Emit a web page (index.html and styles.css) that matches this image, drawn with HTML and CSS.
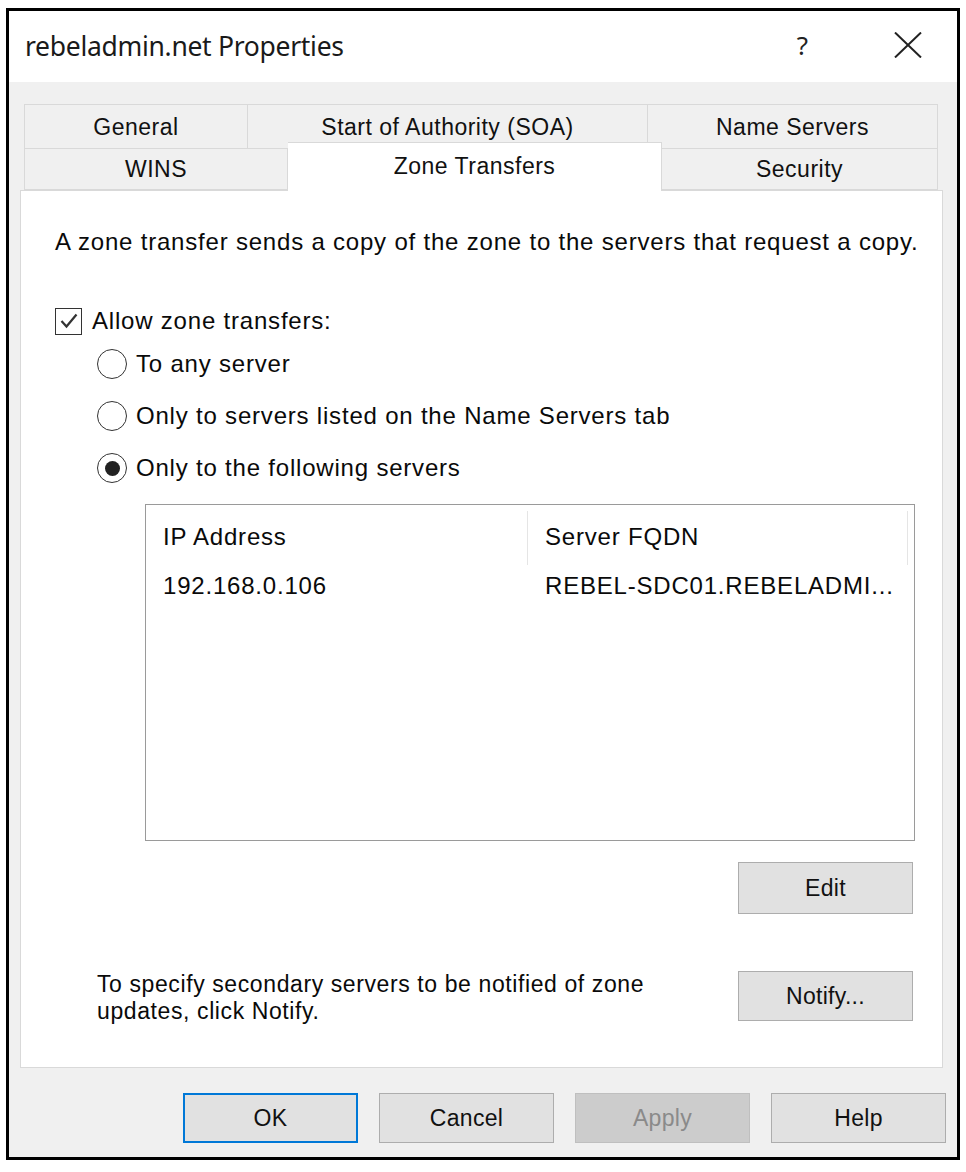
FILE: index.html
```html
<!DOCTYPE html>
<html>
<head>
<meta charset="utf-8">
<link rel="stylesheet" href="styles.css">
</head>
<body>
<div class="dialog">
  <div class="titlebar">
    <span class="title">rebeladmin.net Properties</span>
    <span class="help-q">?</span>
    <svg class="close-x" width="28" height="26" viewBox="0 0 28 26"><path d="M1 0.5 L27 25.5 M27 0.5 L1 25.5" stroke="#222" stroke-width="2" fill="none"/></svg>
  </div>
  <div class="body">
    <div class="tabs">
      <div class="tabrow row1">
        <div class="tab t-general">General</div>
        <div class="tab t-soa">Start of Authority (SOA)</div>
        <div class="tab t-ns">Name Servers</div>
      </div>
      <div class="tabrow row2">
        <div class="tab t-wins">WINS</div>
        <div class="tab t-zone active">Zone Transfers</div>
        <div class="tab t-sec">Security</div>
      </div>
    </div>
    <div class="panel">
      <p class="intro">A zone transfer sends a copy of the zone to the servers that request a copy.</p>
      <div class="check-row">
        <span class="checkbox"><svg width="24" height="24" viewBox="0 0 24 24"><polyline points="4.5,12 9.5,17.5 19.5,5.5" fill="none" stroke="#333" stroke-width="2.2"/></svg></span>
        <span class="label">Allow zone transfers:</span>
      </div>
      <div class="radio-row"><span class="radio"></span><span class="label">To any server</span></div>
      <div class="radio-row"><span class="radio"></span><span class="label">Only to servers listed on the Name Servers tab</span></div>
      <div class="radio-row"><span class="radio checked"><span class="dot"></span></span><span class="label">Only to the following servers</span></div>
      <div class="listbox">
        <div class="list-head">
          <div class="col c1">IP Address</div>
          <div class="col c2">Server FQDN</div>
          <div class="col c3"></div>
        </div>
        <div class="list-row">
          <div class="col c1">192.168.0.106</div>
          <div class="col c2">REBEL-SDC01.REBELADMI...</div>
        </div>
      </div>
      <div class="edit-row"><button class="btn">Edit</button></div>
      <div class="notify-row">
        <p class="notify-text">To specify secondary servers to be notified of zone<br>updates, click Notify.</p>
        <button class="btn">Notify...</button>
      </div>
    </div>
    <div class="buttons">
      <button class="btn dlg ok">OK</button>
      <button class="btn dlg">Cancel</button>
      <button class="btn dlg disabled">Apply</button>
      <button class="btn dlg">Help</button>
    </div>
  </div>
</div>
</body>
</html>
```
FILE: styles.css
```css
* { box-sizing: border-box; }
html, body { margin: 0; padding: 0; background: #fff; }
body { font-family: "Liberation Sans", Arial, sans-serif; color: #0a0a0a; }

.dialog {
  margin: 8px 0 0 6px;
  width: 954px;
  height: 1152px;
  border: 3px solid #000;
  display: flex;
  flex-direction: column;
  background: #f0f0f0;
}

.titlebar {
  height: 71px;
  background: #fff;
  display: flex;
  align-items: center;
  padding-left: 16px;
  flex: none;
}
.title {
  font-family: "Noto Sans", "Open Sans", sans-serif;
  font-size: 26.5px;
  color: #1a1a1a;
  letter-spacing: -0.3px;
  margin-top: -2px;
}
.help-q {
  margin-left: auto;
  font-family: "Noto Sans", sans-serif;
  font-size: 26px;
  color: #222;
  margin-right: 86px;
  margin-top: -4px;
}
.close-x { margin-right: 35px; margin-top: -4px; }

.body {
  flex: 1;
  padding: 22px 14px 0 11px;
  display: flex;
  flex-direction: column;
}

.tabs { padding: 0 5px 0 4px; }
.tabrow { display: flex; }
.tab {
  font-size: 23px;
  letter-spacing: 0.5px;
  text-align: center;
  background: #f0f0f0;
  border: 1px solid #d9d9d9;
  color: #111;
}
.row1 .tab { height: 44px; line-height: 44px; border-bottom: none; }
.row1 .tab + .tab { border-left: none; }
.row2 .tab { height: 42px; line-height: 40px; }
.row2 .tab + .tab { border-left: none; }
.t-general { width: 224px; }
.t-soa { width: 400px; }
.t-ns { width: 290px; }
.t-wins { width: 264px; }
.t-zone { width: 374px; }
.t-sec { width: 276px; }
.tab.active {
  background: #fff;
  border: 1px solid #d9d9d9;
  border-bottom: none;
  height: 49px;
  margin-top: -6px;
  margin-bottom: -1px;
  line-height: 46px;
  position: relative;
  z-index: 2;
}
.row2 .tab.active + .tab { border-left: none; }

.panel {
  width: 923px;
  height: 878px;
  background: #fff;
  border: 1px solid #d9d9d9;
  position: relative;
  z-index: 1;
  font-size: 24px;
  letter-spacing: 0.8px;
  padding-left: 34px;
}
.intro { margin: 37px 0 0 0; line-height: 28px; }

.check-row { display: flex; align-items: center; height: 28px; margin-top: 51px; }
.checkbox {
  width: 27px; height: 27px;
  border: 1.6px solid #333;
  display: flex; align-items: center; justify-content: center;
  margin-right: 10px;
  background: #fff;
  flex: none;
}
.label { line-height: 28px; }

.radio-row { display: flex; align-items: center; height: 30px; margin-left: 42px; margin-top: 22px; }
.check-row + .radio-row { margin-top: 14px; }
.radio {
  width: 30px; height: 30px;
  border: 1.8px solid #333;
  border-radius: 50%;
  display: flex; align-items: center; justify-content: center;
  margin-right: 9px;
  flex: none;
}
.radio .dot { width: 15px; height: 15px; border-radius: 50%; background: #222; }

.listbox {
  margin: 21px 0 0 90px;
  width: 770px;
  height: 337px;
  border: 1px solid #9a9a9a;
  background: #fff;
}
.list-head { display: flex; height: 64px; }
.list-head .col { line-height: 64px; position: relative; }
.list-head .c1::after, .list-head .c2::after {
  content: ""; position: absolute; right: 0; top: 6px; bottom: 4px; width: 1px; background: #e5e5e5;
}
.list-row { display: flex; height: 34px; }
.list-row .col { line-height: 34px; }
.col { padding-left: 17px; white-space: nowrap; overflow: hidden; }
.c1 { width: 382px; flex: none; }
.c2 { width: 380px; flex: none; }
.list-head .c3 { flex: 1; padding: 0; }

.btn {
  font-family: "Liberation Sans", Arial, sans-serif;
  font-size: 23px;
  letter-spacing: 0.3px;
  color: #111;
  background: #e1e1e1;
  border: 1.5px solid #adadad;
  width: 175px;
  height: 52px;
  padding: 0;
}
.edit-row { display: flex; justify-content: flex-end; margin: 21px 29px 0 0; }
.notify-row {
  display: flex;
  align-items: flex-start;
  margin: 57px 29px 0 42px;
}
.notify-text { margin: 0; line-height: 27px; margin-top: 0; font-size: 23px; letter-spacing: 0.6px; }
.notify-row .btn { margin-left: auto; height: 50px; }

.buttons {
  display: flex;
  justify-content: flex-end;
  gap: 21px;
  margin-top: 25px;
  margin-right: -3px;
}
.btn.dlg { width: 175px; height: 50px; }
.btn.ok { border: 2.5px solid #0078d7; }
.btn.disabled { background: #cccccc; color: #8a8a8a; border-color: #bfbfbf; }
```
